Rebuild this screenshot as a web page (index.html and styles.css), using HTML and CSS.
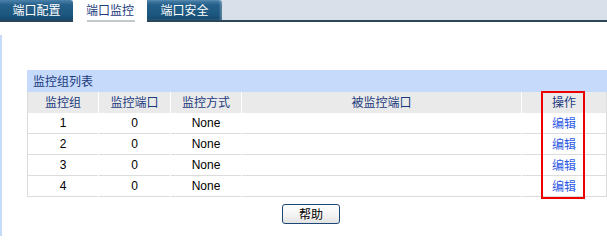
FILE: index.html
```html
<!DOCTYPE html>
<html lang="zh-CN">
<head>
<meta charset="utf-8">
<title>端口监控</title>
<link rel="stylesheet" href="styles.css">
</head>
<body>
<div class="tabbar">
  <div class="tab">端口配置</div>
  <div class="tab active">端口监控</div>
  <div class="tab">端口安全</div>
  <div class="tab-fill"></div>
</div>
<div class="content">
  <div class="panel">
    <div class="panel-title">监控组列表</div>
    <div class="rows">
      <div class="row head">
        <div class="cell">监控组</div>
        <div class="cell">监控端口</div>
        <div class="cell">监控方式</div>
        <div class="cell">被监控端口</div>
        <div class="cell">操作</div>
      </div>
      <div class="row">
        <div class="cell num">1</div>
        <div class="cell num">0</div>
        <div class="cell num">None</div>
        <div class="cell"></div>
        <div class="cell"><a class="link" href="#">编辑</a></div>
      </div>
      <div class="row">
        <div class="cell num">2</div>
        <div class="cell num">0</div>
        <div class="cell num">None</div>
        <div class="cell"></div>
        <div class="cell"><a class="link" href="#">编辑</a></div>
      </div>
      <div class="row">
        <div class="cell num">3</div>
        <div class="cell num">0</div>
        <div class="cell num">None</div>
        <div class="cell"></div>
        <div class="cell"><a class="link" href="#">编辑</a></div>
      </div>
      <div class="row">
        <div class="cell num">4</div>
        <div class="cell num">0</div>
        <div class="cell num">None</div>
        <div class="cell"></div>
        <div class="cell"><a class="link" href="#">编辑</a></div>
      </div>
    </div>
    <div class="highlight"></div>
  </div>
  <div class="actions">
    <button class="btn" type="button">帮助</button>
  </div>
</div>
</body>
</html>
```

FILE: styles.css
```css
html, body {
  margin: 0;
  padding: 0;
  background: #ffffff;
}

body {
  font-family: "Noto Sans CJK SC", "Liberation Sans", sans-serif;
  font-size: 12px;
  color: #000;
  width: 607px;
  height: 236px;
  overflow: hidden;
}

.tabbar {
  display: flex;
  height: 22px;
  background: #d9e0ea;
}

.tab {
  width: 73px;
  height: 20px;
  line-height: 20px;
  text-align: center;
  color: #ffffff;
  background: linear-gradient(#4a82aa, #245f8a 25%, #1d5880 70%, #15496f);
  border-bottom: 2px solid #2b4656;
  border-top-right-radius: 3px;
}

.tab:nth-child(3) {
  width: 75px;
  box-shadow: inset -2px 0 2px rgba(255,255,255,0.25);
}

.tab.active {
  width: 74px;
  height: 22px;
  line-height: 20px;
  border-bottom: none;
  border-radius: 0;
  color: #1c3b7d;
  background: linear-gradient(#c3cacd, #c3cacd) no-repeat 14px 20px / 48px 2px, #ffffff;
}

.tab-fill {
  flex: 1;
  height: 20px;
  border-bottom: 2px solid #2b4656;
}

.content {
  margin-top: 13px;
  padding-top: 35px;
  border-left: 2px solid #c6dbf8;
  height: 166px;
}

.panel {
  position: relative;
  margin-left: 25px;
  width: 580px;
}

.panel-title {
  height: 22px;
  line-height: 21px;
  padding-left: 6px;
  background: #c6dafc;
  color: #1c3b7d;
}

.rows {
  border-left: 1px solid #dcdcdc;
  border-right: 1px solid #dcdcdc;
}

.row {
  display: grid;
  grid-template-columns: 70px 71px 70px 279px 84px;
  column-gap: 1px;
}

.cell {
  height: 20px;
  line-height: 20px;
  text-align: center;
  border-bottom: 1px solid #dcdcdc;
}

.row.head .cell {
  background: #eaeaea;
  color: #1c3b7d;
  border-bottom-color: #eaeaea;
}

.num {
  font-family: "Liberation Sans", Arial, sans-serif;
}

.link {
  color: #2f5be6;
  text-decoration: none;
}

.highlight {
  position: absolute;
  left: 514px;
  top: 21px;
  width: 40px;
  height: 104px;
  border: 2px solid #ee0000;
}

.actions {
  padding-top: 7px;
  padding-left: 280px;
}

.btn {
  width: 58px;
  height: 20px;
  padding: 0;
  font-family: "Noto Sans CJK SC", sans-serif;
  font-size: 12px;
  line-height: 18px;
  color: #000;
  border: 1px solid #1d4876;
  border-radius: 3px;
  background: linear-gradient(#ffffff, #f2f2f2 60%, #e2e2e2);
}
```
